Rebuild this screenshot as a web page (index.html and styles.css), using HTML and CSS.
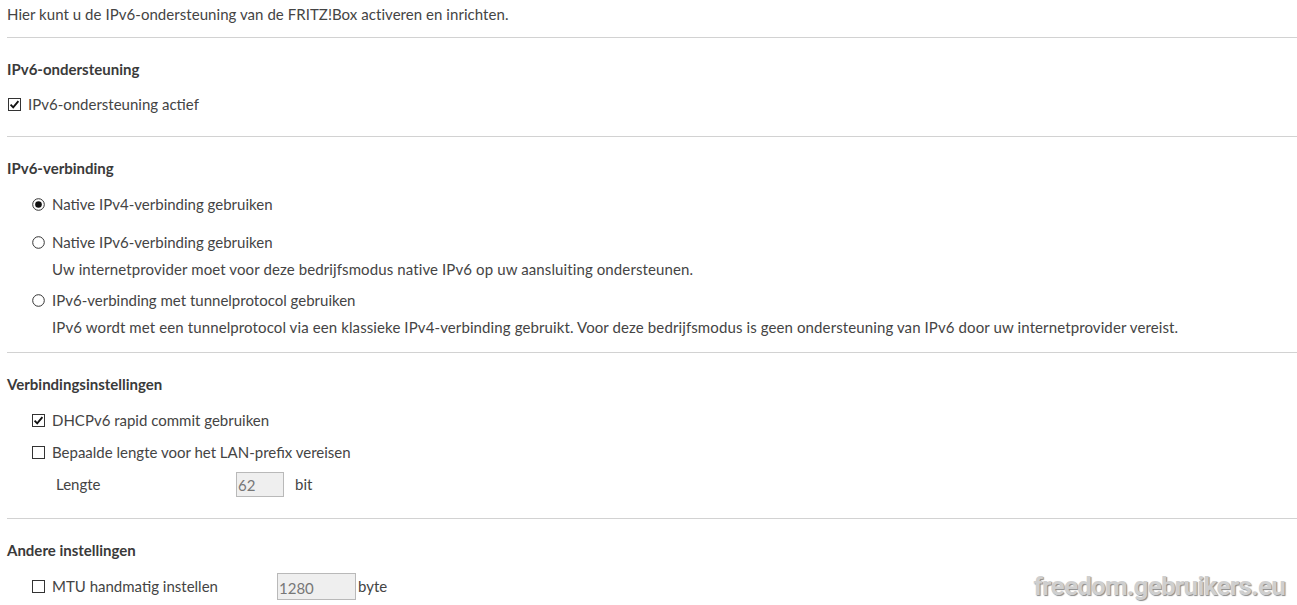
FILE: index.html
```html
<!DOCTYPE html>
<html lang="nl">
<head>
    <meta charset="UTF-8">
    <title>IPv6</title>
    <link rel="stylesheet" href="styles.css">
</head>
<body>
    <div class="page">
        <p class="intro">Hier kunt u de IPv6-ondersteuning van de FRITZ!Box activeren en inrichten.</p>

        <div class="section">
            <h2>IPv6-ondersteuning</h2>
            <label class="row flush">
                <svg class="box" viewBox="0 0 13 13"><rect x="0.5" y="0.5" width="12" height="12" fill="#fff" stroke="#333"/><path d="M2.6 6.6 L5.2 9.3 L10.4 3.2" fill="none" stroke="#111" stroke-width="1.9"/></svg>
                IPv6-ondersteuning actief
            </label>
        </div>

        <div class="section">
            <h2>IPv6-verbinding</h2>
            <div class="options">
                <div class="option first">
                    <label class="row">
                        <svg class="box" viewBox="0 0 13 13"><circle cx="6.5" cy="6.5" r="5.8" fill="#fff" stroke="#333"/><circle cx="6.5" cy="6.5" r="3.3" fill="#111"/></svg>
                        Native IPv4-verbinding gebruiken
                    </label>
                </div>
                <div class="option">
                    <label class="row">
                        <svg class="box" viewBox="0 0 13 13"><circle cx="6.5" cy="6.5" r="5.8" fill="#fff" stroke="#333"/></svg>
                        Native IPv6-verbinding gebruiken
                    </label>
                    <p class="hint">Uw internetprovider moet voor deze bedrijfsmodus native IPv6 op uw aansluiting ondersteunen.</p>
                </div>
                <div class="option last">
                    <label class="row">
                        <svg class="box" viewBox="0 0 13 13"><circle cx="6.5" cy="6.5" r="5.8" fill="#fff" stroke="#333"/></svg>
                        IPv6-verbinding met tunnelprotocol gebruiken
                    </label>
                    <p class="hint">IPv6 wordt met een tunnelprotocol via een klassieke IPv4-verbinding gebruikt. Voor deze bedrijfsmodus is geen ondersteuning van IPv6 door uw internetprovider vereist.</p>
                </div>
            </div>
        </div>

        <div class="section connection">
            <h2>Verbindingsinstellingen</h2>
            <label class="row">
                <svg class="box" viewBox="0 0 13 13"><rect x="0.5" y="0.5" width="12" height="12" fill="#fff" stroke="#333"/><path d="M2.6 6.6 L5.2 9.3 L10.4 3.2" fill="none" stroke="#111" stroke-width="1.9"/></svg>
                DHCPv6 rapid commit gebruiken
            </label>
            <label class="row">
                <svg class="box" viewBox="0 0 13 13"><rect x="0.5" y="0.5" width="12" height="12" fill="#fff" stroke="#333"/></svg>
                Bepaalde lengte voor het LAN-prefix vereisen
            </label>
            <div class="row field-row">
                <span class="field-label">Lengte</span>
                <span class="field small">62</span>
                <span class="unit">bit</span>
            </div>
        </div>

        <div class="section">
            <h2>Andere instellingen</h2>
            <div class="row">
                <svg class="box" viewBox="0 0 13 13"><rect x="0.5" y="0.5" width="12" height="12" fill="#fff" stroke="#333"/></svg>
                <span class="mtu-label">MTU handmatig instellen</span>
                <span class="field wide">1280</span>
                <span class="unit tight">byte</span>
            </div>
        </div>
    </div>

    <div class="watermark">freedom.gebruikers.eu</div>
</body>
</html>
```

FILE: styles.css
```css
* {
    margin: 0;
    padding: 0;
    box-sizing: border-box;
}

body {
    font-family: Lato, "Source Sans Pro", Arial, sans-serif;
    font-size: 15px;
    color: #444;
    background: #fff;
    overflow: hidden;
}

.page {
    padding-left: 7px;
}

.intro {
    line-height: 28px;
    height: 37px;
    letter-spacing: 0.05px;
}

.section {
    border-top: 1px solid #d2d2d2;
    padding-top: 17px;
    padding-bottom: 19px;
}

.section.connection {
    padding-bottom: 21px;
}

.section h2 {
    font-size: 15px;
    font-weight: bold;
    line-height: 28px;
    margin-bottom: 9px;
    color: #3a3a3a;
}

.row {
    display: flex;
    align-items: center;
    height: 26px;
    padding-left: 25px;
    margin-bottom: 6px;
}

.row:last-child {
    margin-bottom: 0;
}

.row.flush {
    padding-left: 1px;
    margin-top: -1px;
}

.box {
    width: 13px;
    height: 13px;
    margin-right: 7px;
    flex-shrink: 0;
}

.options .option {
    margin-bottom: 8px;
}

.options .option .row {
    margin-bottom: 0;
}

.options .option.first {
    margin-bottom: 12px;
}

.options .option.last {
    margin-bottom: -4px;
}

.hint {
    padding-left: 45px;
    line-height: 20px;
    margin-top: 4px;
    letter-spacing: 0.11px;
}

.field-row {
    padding-left: 49px;
    margin-top: 6px;
}

.field-label {
    width: 180px;
}

.field {
    display: inline-block;
    height: 25px;
    line-height: 25px;
    background: #efefef;
    border: 1px solid #b9b9b9;
    color: #777;
    padding-left: 1px;
}

.field.small {
    width: 48px;
}

.field.wide {
    width: 79px;
    height: 27px;
    line-height: 28px;
}

.unit {
    margin-left: 11px;
}

.unit.tight {
    margin-left: 2px;
}

.mtu-label {
    width: 225px;
}

.watermark {
    position: absolute;
    right: 12px;
    bottom: 4px;
    font-family: Roboto, sans-serif;
    font-weight: bold;
    font-size: 26px;
    letter-spacing: -0.75px;
    color: #cfcfcf;
    text-shadow: 1px 1px 1px #8a8a8a;
}
```
